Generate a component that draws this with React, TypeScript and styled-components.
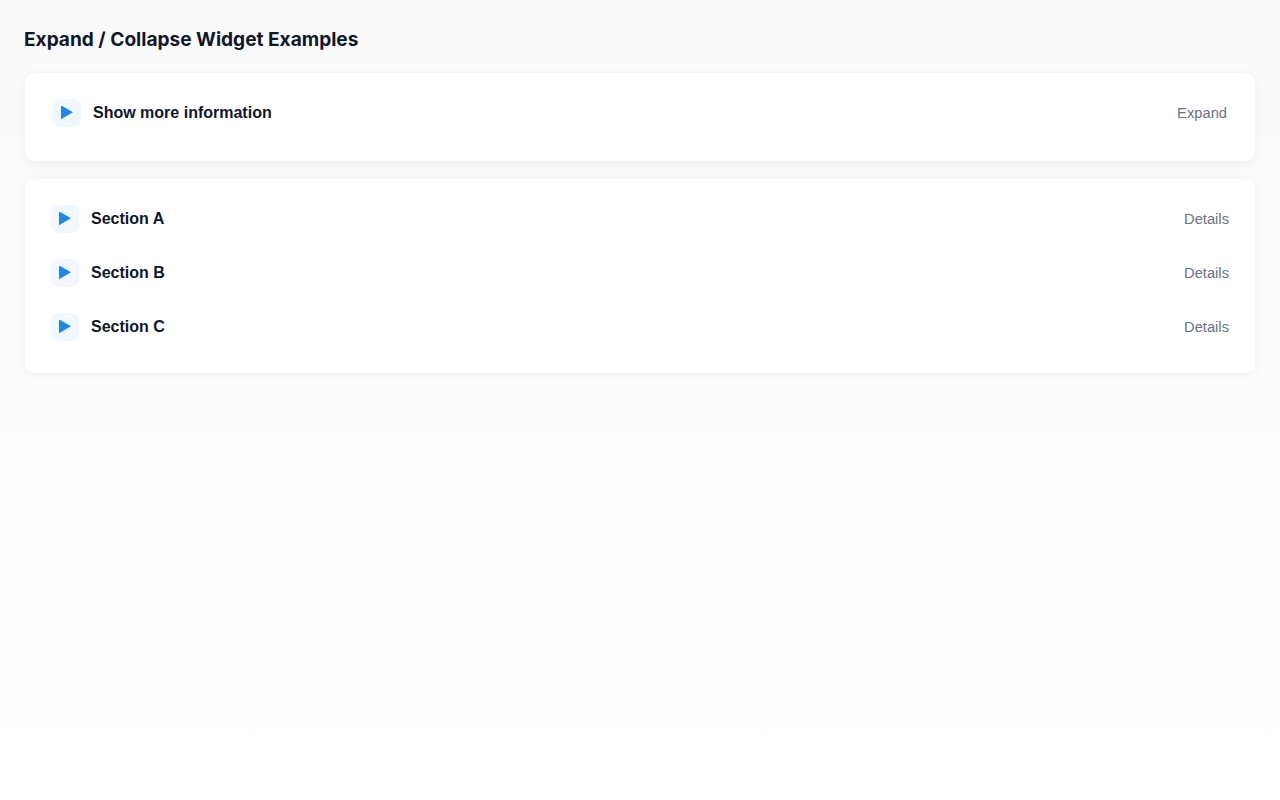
import React from "react";
import styled, { createGlobalStyle } from "styled-components";

const Global = createGlobalStyle`
  html, body { margin: 0; padding: 0; }
  body {
    min-height: 100vh;
    background: linear-gradient(180deg, #fafafa 0%, #ffffff 100%);
    font-family: "Liberation Sans", Arial, sans-serif;
    color: #0f172a;
  }
`;

const Page = styled.main`
  padding: 24px 25px;
  display: flex;
  flex-direction: column;
`;

const Title = styled.h1`
  margin: 1px 0 19px -1px;
  font-family: Inter, sans-serif;
  font-size: 19.08px;
  line-height: 29px;
  font-weight: 700;
  color: #0f172a;
`;

const Card = styled.section<{ $inset: number; $bottom: number }>`
  background: #fff;
  border-radius: 10px;
  box-shadow: 0 2px 8px rgba(15, 23, 42, 0.06);
  padding: 26px ${(p) => p.$inset}px ${(p) => p.$bottom}px;
  margin-bottom: 18px;
  display: flex;
  flex-direction: column;
  gap: 26px;
`;

const Row = styled.div`
  display: flex;
  align-items: center;
  height: 28px;
`;

const IconBox = styled.span`
  width: 28px;
  height: 28px;
  border-radius: 8px;
  background: #f1f7ff;
  display: flex;
  align-items: center;
  justify-content: center;
  margin-right: 12px;
  flex: none;
`;

const Label = styled.span`
  font-size: 16px;
  font-weight: 700;
  color: #0f172a;
  flex: 1;
`;

const Hint = styled.span`
  font-size: 14.72px;
  line-height: 26px;
  color: #6b7280;
`;

const Arrow = () => (
  <svg width="12" height="14" viewBox="0 0.7 12 14" aria-hidden="true">
    <path d="M0 0 L12 7 L0 14 Z" fill="#1e88e5" />
  </svg>
);

const Item = ({ label, hint }: { label: string; hint: string }) => (
  <Row>
    <IconBox><Arrow /></IconBox>
    <Label>{label}</Label>
    <Hint>{hint}</Hint>
  </Row>
);

export default function App() {
  return (
    <>
      <Global />
      <Page>
        <Title>Expand / Collapse Widget Examples</Title>
        <Card $inset={28} $bottom={34}>
          <Item label="Show more information" hint="Expand" />
        </Card>
        <Card $inset={26} $bottom={32}>
          <Item label="Section A" hint="Details" />
          <Item label="Section B" hint="Details" />
          <Item label="Section C" hint="Details" />
        </Card>
      </Page>
    </>
  );
}
